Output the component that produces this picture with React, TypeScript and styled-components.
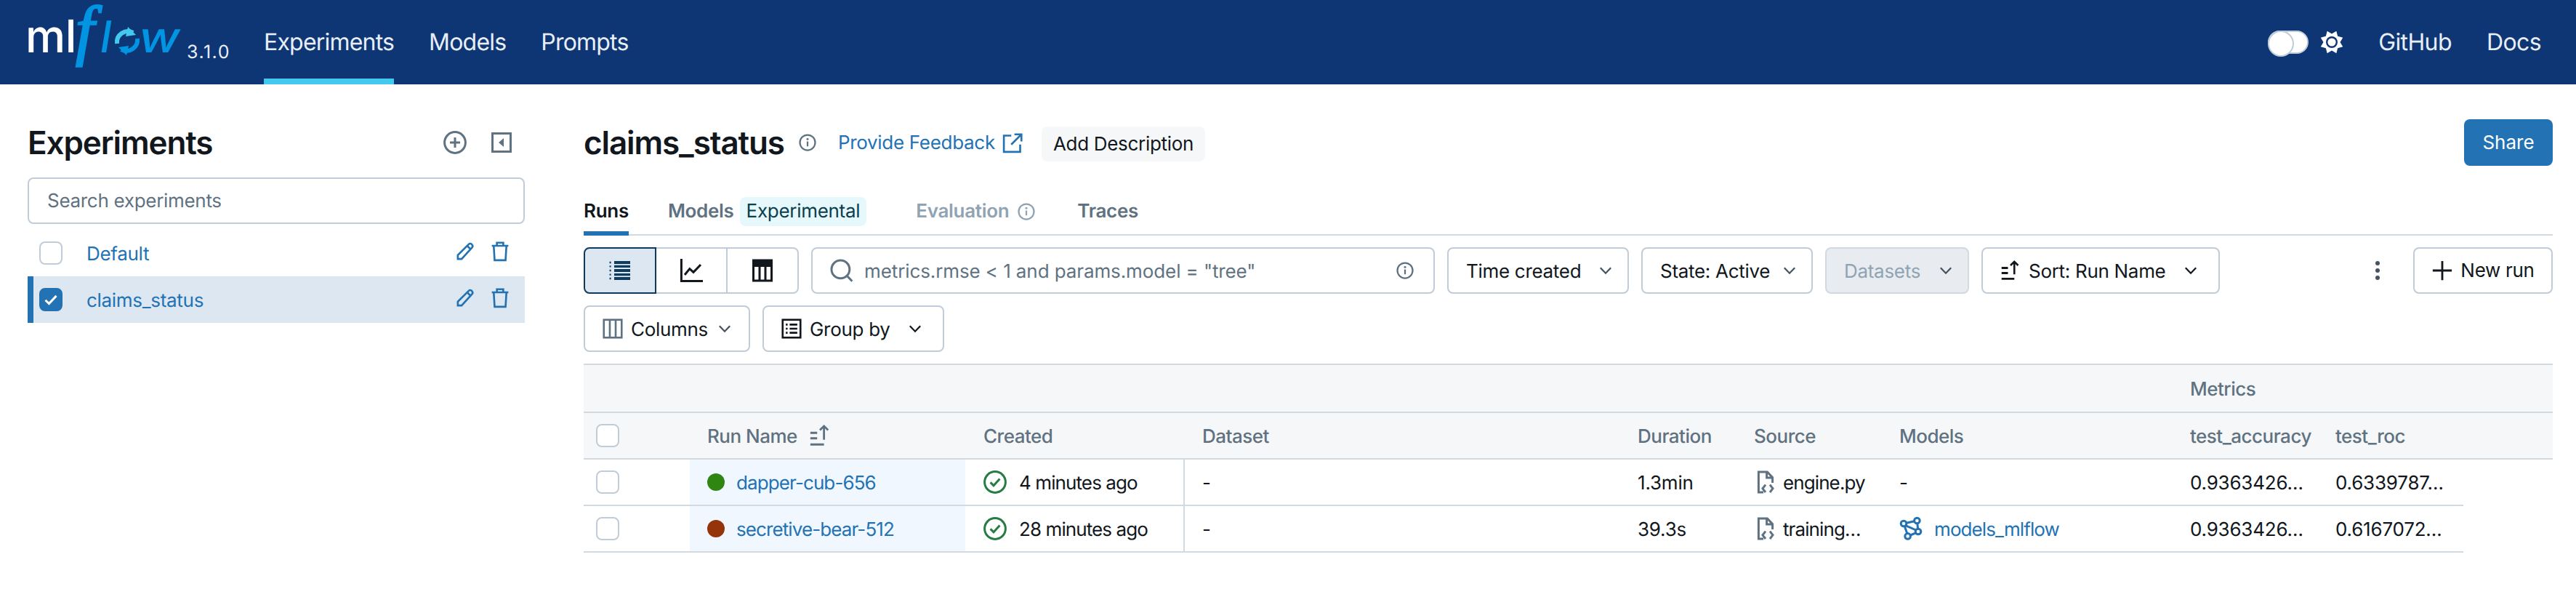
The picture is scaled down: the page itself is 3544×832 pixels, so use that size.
import React from "react";
import styled, { createGlobalStyle } from "styled-components";

const GlobalStyle = createGlobalStyle`
  html, body { margin: 0; padding: 0; background: #fff; }
  body {
    font-family: Inter, "Liberation Sans", sans-serif;
    font-size: 26px;
    line-height: 40px;
    letter-spacing: -0.3px;
    color: #11171c;
    text-rendering: geometricPrecision;
  }
  * { box-sizing: border-box; }
`;

const BLUE = "#2272b4";
const GREY = "#5f7281";
const INK = "#11171c";

const Svg = styled.svg<{ $size?: number; $color?: string }>`
  width: ${(p) => p.$size ?? 32}px;
  height: ${(p) => p.$size ?? 32}px;
  color: ${(p) => p.$color ?? INK};
  flex: none;
  display: block;
  overflow: visible;
`;

type IconProps = { size?: number; color?: string };

const stroke = { fill: "none", stroke: "currentColor", strokeWidth: 1.5 };

const Icon: React.FC<IconProps & { children: React.ReactNode }> = ({ size, color, children }) => (
  <Svg viewBox="0 0 16 16" $size={size} $color={color}>
    {children}
  </Svg>
);

const PlusCircle = (p: IconProps) => (
  <Icon {...p}>
    <circle cx="8" cy="8" r="7.2" {...stroke} />
    <path d="M8 4.5v7M4.5 8h7" {...stroke} />
  </Icon>
);
const Collapse = (p: IconProps) => (
  <Icon {...p}>
    <rect x="1.75" y="1.75" width="12.5" height="12.5" {...stroke} />
    <path d="M9.5 5v6L6 8z" fill="currentColor" />
  </Icon>
);
const Pencil = (p: IconProps) => (
  <Icon {...p}>
    <path d="M2.2 13.8v-3L10.8 2.2a1.6 1.6 0 0 1 2.6 0.4c.6.7.5 1.6 0 2.2L5.2 13.8z" {...stroke} />
    <path d="M9.6 3.6l3 2.8" {...stroke} />
  </Icon>
);
const Trash = (p: IconProps) => (
  <Icon {...p}>
    <path d="M1.5 3.4h13M5.5 3.2V1h5v2.2M3 3.4l.7 11.4h8.6L13 3.4" {...stroke} />
  </Icon>
);
const Check = (p: IconProps) => (
  <Icon {...p}>
    <path d="M3 8.5l3.3 3.2L13 4.6" fill="none" stroke="currentColor" strokeWidth="2" />
  </Icon>
);
const Info = (p: IconProps) => (
  <Icon {...p}>
    <circle cx="8" cy="8" r="7" {...stroke} />
    <path d="M8 7v4.5" {...stroke} />
    <circle cx="8" cy="4.8" r="1" fill="currentColor" />
  </Icon>
);
const External = (p: IconProps) => (
  <Icon {...p}>
    <path d="M7 2H1.2v12.8H14V9M9.5 1h5.5v5.5M15 1L7 9" {...stroke} />
  </Icon>
);
const ListIcon = (p: IconProps) => (
  <Icon {...p}>
    <path d="M4 2.5h11M4 8h11M4 13.5h11" fill="none" stroke="currentColor" strokeWidth="2" />
    <path d="M.8 2.5h1M.8 5.2h1M.8 8h1M.8 10.8h1M.8 13.5h1" fill="none" stroke="currentColor" strokeWidth="1.2" />
    <path d="M4 5.2h11M4 10.8h11" fill="none" stroke="currentColor" strokeWidth="1.6" />
  </Icon>
);
const ChartIcon = (p: IconProps) => (
  <Icon {...p}>
    <path d="M1.2 0v15.2H16M3.5 11l3.4-4.2 2.6 2.4L14.5 4" {...stroke} />
  </Icon>
);
const TableIcon = (p: IconProps) => (
  <Icon {...p}>
    <rect x="1.75" y="1" width="12.5" height="14" {...stroke} />
    <rect x="1.75" y="1" width="12.5" height="4.5" fill="currentColor" />
    <path d="M6 5.5V15M10 5.5V15" {...stroke} />
  </Icon>
);
const Search = (p: IconProps) => (
  <Icon {...p}>
    <circle cx="7.2" cy="7.2" r="6.2" {...stroke} />
    <path d="M11.6 11.6l3.6 3.8" {...stroke} />
  </Icon>
);
const ColumnsIcon = (p: IconProps) => (
  <Icon {...p}>
    <rect x="1" y="1" width="14" height="14" {...stroke} />
    <path d="M5.7 1v14M10.3 1v14" {...stroke} />
  </Icon>
);
const GroupIcon = (p: IconProps) => (
  <Icon {...p}>
    <rect x="1" y="1" width="14" height="14" {...stroke} />
    <path d="M6.5 4.8h6M6.5 8h6M6.5 11.2h6" {...stroke} />
    <path d="M3.5 4.8h1.4M3.5 8h1.4M3.5 11.2h1.4" {...stroke} />
  </Icon>
);
const SortIcon = (p: IconProps) => (
  <Icon {...p}>
    <path d="M1 6h5M1 10h5M1 14.5h10" fill="none" stroke="currentColor" strokeWidth="1.6" />
    <path d="M11 11V1M8 4l3-3 3 3" {...stroke} />
  </Icon>
);
const Chevron = (p: IconProps) => (
  <Icon size={24} {...p}>
    <path d="M3.2 5.5L8 10.5l4.8-5" {...stroke} />
  </Icon>
);
const Plus = (p: IconProps) => (
  <Icon {...p}>
    <path d="M8 1v14M1 8h14" {...stroke} />
  </Icon>
);
const CheckCircle = (p: IconProps) => (
  <Icon {...p} color="#277c43">
    <circle cx="8" cy="8" r="7.2" {...stroke} />
    <path d="M4.8 8.2l2.2 2.2 4.2-4.6" {...stroke} />
  </Icon>
);
const FileCode = (p: IconProps) => (
  <Icon {...p}>
    <path d="M6.5 15H3.2V1h6l3.6 3.8v3.7M8.8 1v4h4" {...stroke} />
    <path d="M8 9.8L6 12.4l2 2.6M11 9.8l2 2.6-2 2.6" {...stroke} />
  </Icon>
);
const ModelIcon = (p: IconProps) => (
  <Icon {...p}>
    <circle cx="3" cy="4.5" r="1.9" {...stroke} />
    <circle cx="12.2" cy="2.5" r="1.9" {...stroke} />
    <circle cx="13" cy="10" r="1.9" {...stroke} />
    <circle cx="5.8" cy="13.2" r="1.9" {...stroke} />
    <path d="M4.8 4.1l5.6-1.2M3.6 6.3l1.8 5M4.5 5.9l7 3.1M11.4 10.9l-3.8 1.6M12.4 4.4l.4 3.7" {...stroke} />
  </Icon>
);

const Sun = () => {
  const points = Array.from({ length: 16 }, (_, i) => {
    const angle = (i * Math.PI) / 8 - Math.PI / 2 + Math.PI / 8;
    const r = i % 2 === 0 ? 16.5 : 11.5;
    return `${16 + r * Math.cos(angle)},${16 + r * Math.sin(angle)}`;
  }).join(" ");
  return (
    <Svg viewBox="0 0 32 32" $size={32} $color="#fff">
      <polygon points={points} fill="currentColor" />
      <circle cx="16" cy="16" r="8" fill="#0e3675" />
      <circle cx="16" cy="16" r="5.6" fill="currentColor" />
    </Svg>
  );
};

const LogoSvg = styled.svg`
  width: 215px;
  height: 96px;
  display: block;
  overflow: visible;
  flex: none;
`;

const LogoMark = () => (
  <LogoSvg viewBox="0 0 215 96">
    <text x="-3" y="62" fontFamily="Inter, sans-serif" fontSize="62" fontWeight="500" fill="#fff">
      ml
    </text>
    <text x="66" y="62" fontFamily="'Liberation Serif', serif" fontStyle="italic" fontSize="92" fill="#0194e2" stroke="#0194e2" strokeWidth="2.5">
      f
    </text>
    <text x="100" y="62" fontFamily="Inter, sans-serif" fontStyle="italic" fontSize="60" fontWeight="500" fill="#0194e2">
      l
    </text>
    <path d="M123 50a15 15 0 0 1 22-15" fill="none" stroke="#43c9ed" strokeWidth="6" />
    <path d="M138 27l11 11-14 2z" fill="#43c9ed" />
    <path d="M151 43a15 15 0 0 1-22 15" fill="none" stroke="#0194e2" strokeWidth="6" />
    <path d="M136 66l-11-11 14-2z" fill="#0194e2" />
    <text x="153" y="62" fontFamily="Inter, sans-serif" fontStyle="italic" fontSize="58" fontWeight="500" fill="#0194e2" textLength="56" lengthAdjust="spacingAndGlyphs">
      w
    </text>
  </LogoSvg>
);

const Page = styled.div`
  width: 3544px;
  height: 832px;
  overflow: hidden;
  background: #fff;
`;

const TopBar = styled.header`
  height: 116px;
  background: #0e3675;
  display: flex;
  align-items: stretch;
  padding: 0 48px 0 38px;
`;

const Brand = styled.div`
  display: flex;
  align-items: center;
  margin-right: 48px;
`;

const Version = styled.span`
  font-size: 25px;
  letter-spacing: 1.5px;
  color: #e8eef5;
  margin: 28px 0 0 4px;
  width: 58px;
`;

const NavList = styled.nav`
  display: flex;
  gap: 48px;
  flex: 1;
`;

const NavItem = styled.a<{ $active?: boolean }>`
  display: flex;
  align-items: center;
  font-size: 32px;
  letter-spacing: -0.8px;
  color: #e8eef5;
  border-bottom: 8px solid ${(p) => (p.$active ? "#43c9ed" : "transparent")};
  border-top: 8px solid transparent;
`;

const TopRight = styled.div`
  display: flex;
  align-items: center;
`;

const Toggle = styled.span`
  width: 56px;
  height: 32px;
  border-radius: 16px;
  background: #fff;
  border: 2px solid #c0cdd8;
  margin-right: 16px;
  display: block;
  position: relative;
  &::before {
    content: "";
    position: absolute;
    left: -2px;
    top: -2px;
    width: 32px;
    height: 32px;
    border-radius: 50%;
    border: 2px solid #c0cdd8;
    background: #fff;
  }
`;

const TopLink = styled.a`
  font-size: 32px;
  letter-spacing: -0.6px;
  color: #e8eef5;
  margin-left: 48px;
`;

const Body = styled.div`
  display: flex;
  align-items: flex-start;
`;

const Sidebar = styled.aside`
  width: 803px;
  flex: none;
  padding: 48px 81px 0 38px;
`;

const SideHead = styled.div`
  height: 64px;
  margin-bottom: 16px;
  display: flex;
  align-items: center;
`;

const H1 = styled.h1`
  font-size: 44px;
  line-height: 56px;
  font-weight: 600;
  letter-spacing: -1.1px;
  margin: 0;
  color: ${INK};
`;

const SideTitle = styled(H1)`
  flex: 1;
`;

const SideHeadIcons = styled.div`
  display: flex;
  gap: 32px;
  margin-right: 16px;
  align-items: center;
`;

const SearchField = styled.div`
  height: 64px;
  border: 2px solid #c0cdd8;
  border-radius: 8px;
  padding: 2px 25px 0;
  display: flex;
  align-items: center;
  color: ${GREY};
  margin-bottom: 8px;
`;

const ExpRow = styled.div<{ $selected?: boolean }>`
  height: 64px;
  display: flex;
  align-items: center;
  background: ${(p) => (p.$selected ? "#dce7f2" : "transparent")};
  border-left: 8px solid ${(p) => (p.$selected ? BLUE : "transparent")};
  padding: 0 20px 0 8px;
`;

const Box = styled.span<{ $checked?: boolean }>`
  width: 32px;
  height: 32px;
  border-radius: 8px;
  flex: none;
  display: flex;
  align-items: center;
  justify-content: center;
  border: 2px solid ${(p) => (p.$checked ? BLUE : "#c0cdd8")};
  background: ${(p) => (p.$checked ? BLUE : "#fff")};
`;

const ExpName = styled.a`
  flex: 1;
  color: ${BLUE};
  margin-left: 33px;
  padding-top: 3px;
`;

const RowIcons = styled.div`
  display: flex;
  gap: 20px;
  margin-top: -4px;
`;

const Main = styled.main`
  flex: 1;
  min-width: 0;
  padding: 48px 32px 0 0;
`;

const TitleRow = styled.div`
  height: 64px;
  display: flex;
  align-items: center;
`;

const TitleInfo = styled.span`
  margin: 0 30px 0 20px;
`;

const FeedbackLink = styled.a`
  color: ${BLUE};
  display: flex;
  align-items: center;
  gap: 10px;
  margin-right: 26px;
  padding-top: 2px;
`;

const AddDescription = styled.button`
  height: 48px;
  border: 0;
  border-radius: 8px;
  background: #f6f7f9;
  padding: 0 16px;
  margin-top: 4px;
  font: inherit;
  letter-spacing: inherit;
  color: ${INK};
`;

const ShareButton = styled.button`
  margin-left: auto;
  width: 122px;
  height: 64px;
  border: 0;
  border-radius: 8px;
  background: ${BLUE};
  color: #fff;
  font: inherit;
`;

const TabBar = styled.div`
  margin-top: 44px;
  height: 52px;
  display: flex;
  gap: 54px;
  border-bottom: 2px solid #d1d9e1;
`;

const Tab = styled.div<{ $active?: boolean; $muted?: boolean }>`
  display: flex;
  align-items: center;
  gap: 12px;
  font-weight: 600;
  height: 52px;
  padding-bottom: 8px;
  color: ${(p) => (p.$active ? INK : p.$muted ? "#8fa3b3" : GREY)};
  border-bottom: 6px solid ${(p) => (p.$active ? BLUE : "transparent")};
  &:last-child {
    margin-left: 4px;
  }
`;

const Tag = styled.span`
  height: 40px;
  display: flex;
  align-items: center;
  padding: 0 9px;
  margin-left: -4px;
  margin-right: 14px;
  background: #e6f8fb;
  color: #0a3f4d;
  border-radius: 8px;
  font-weight: 400;
`;

const ToolRow = styled.div`
  margin-top: 16px;
  display: flex;
  gap: 17px;
  height: 64px;
`;

const Segments = styled.div`
  display: flex;
  width: 296px;
`;

const Segment = styled.span<{ $on?: boolean }>`
  flex: 1;
  display: flex;
  align-items: center;
  justify-content: center;
  border: 2px solid ${(p) => (p.$on ? "#0e3a5e" : "#c0cdd8")};
  background: ${(p) => (p.$on ? "#dce7f2" : "#fff")};
  margin-left: -2px;
  &:first-child {
    margin-left: 0;
    border-radius: 8px 0 0 8px;
    position: relative;
  }
  &:last-child {
    border-radius: 0 8px 8px 0;
  }
`;

const RunSearch = styled.div`
  width: 858px;
  border: 2px solid #c0cdd8;
  border-radius: 8px;
  display: flex;
  align-items: center;
  padding: 0 27px 0 24px;
  gap: 15px;
  color: ${GREY};
`;

const RunSearchText = styled.span`
  flex: 1;
  padding-top: 3px;
  letter-spacing: -0.1px;
`;

const Dropdown = styled.div<{ $w: number; $disabled?: boolean; $pr?: number }>`
  width: ${(p) => p.$w}px;
  border: 2px solid ${(p) => (p.$disabled ? "#d1d9e1" : "#c0cdd8")};
  border-radius: 8px;
  background: ${(p) => (p.$disabled ? "#e8ecf0" : "#fff")};
  color: ${(p) => (p.$disabled ? "#8fa3b3" : INK)};
  display: flex;
  align-items: center;
  padding: 0 ${(p) => p.$pr ?? 18}px 0 24px;
  gap: 11px;
  flex: none;
`;

const DropLabel = styled.span`
  flex: 1;
  white-space: nowrap;
  padding-top: 3px;
`;

const Kebab = styled.div`
  margin-left: auto;
  width: 64px;
  display: flex;
  flex-direction: column;
  align-items: center;
  justify-content: center;
  gap: 4px;
  span {
    width: 6px;
    height: 6px;
    border-radius: 50%;
    background: #45525f;
  }
`;

const NewRun = styled.button`
  width: 192px;
  border: 2px solid #c0cdd8;
  border-radius: 8px;
  background: #fff;
  font: inherit;
  letter-spacing: inherit;
  color: ${INK};
  display: flex;
  align-items: center;
  justify-content: center;
  gap: 10px;
  padding: 0;
`;

const Table = styled.div`
  margin-top: 16px;
`;

const COLUMNS = "146px 379px 302px 599px 160px 200px 400px 200px 200px";

const GroupHead = styled.div`
  height: 68px;
  background: #f6f7f9;
  border-top: 2px solid #d1d9e1;
  border-bottom: 2px solid #d1d9e1;
  display: grid;
  grid-template-columns: 2186px 1fr;
  align-items: center;
  color: ${GREY};
  font-weight: 500;
  letter-spacing: -0.5px;
`;

const HeadRow = styled.div`
  height: 64px;
  background: #f6f7f9;
  border-bottom: 2px solid #d1d9e1;
  display: grid;
  grid-template-columns: ${COLUMNS} 1fr;
  color: ${GREY};
  font-weight: 500;
  letter-spacing: -0.5px;
`;

const DataRow = styled.div`
  height: 64px;
  width: 2586px;
  border-bottom: 2px solid #d1d9e1;
  display: grid;
  grid-template-columns: ${COLUMNS};
  letter-spacing: -0.9px;
`;

const Cell = styled.div<{ $pad?: number; $run?: boolean; $rule?: boolean; $gap?: number }>`
  display: flex;
  align-items: center;
  gap: ${(p) => p.$gap ?? 0}px;
  padding-left: ${(p) => p.$pad ?? 24}px;
  white-space: nowrap;
  background: ${(p) => (p.$run ? "#f0f7fe" : "transparent")};
  border-right: ${(p) => (p.$rule ? "2px solid #d1d9e1" : "0")};
`;

const Label = styled.span<{ $num?: boolean }>`
  padding-top: 3px;
  ${(p) => (p.$num ? "letter-spacing: -0.2px;" : "")}
`;

const Dot = styled.span<{ $color: string }>`
  width: 24px;
  height: 24px;
  border-radius: 50%;
  background: ${(p) => p.$color};
  flex: none;
`;

const LinkText = styled(Label)`
  color: ${BLUE};
`;

const runs = [
  {
    name: "dapper-cub-656",
    dot: "#2f8610",
    created: "4 minutes ago",
    duration: "1.3min",
    source: "engine.py",
    model: "",
    accuracy: "0.9363426…",
    roc: "0.6339787…",
  },
  {
    name: "secretive-bear-512",
    dot: "#95330a",
    created: "28 minutes ago",
    duration: "39.3s",
    source: "training…",
    model: "models_mlflow",
    accuracy: "0.9363426…",
    roc: "0.6167072…",
  },
];

const App: React.FC = () => {
  return (
    <Page>
      <GlobalStyle />
      <TopBar>
        <Brand>
          <LogoMark />
          <Version>3.1.0</Version>
        </Brand>
        <NavList>
          <NavItem $active>Experiments</NavItem>
          <NavItem>Models</NavItem>
          <NavItem>Prompts</NavItem>
        </NavList>
        <TopRight>
          <Toggle />
          <Sun />
          <TopLink>GitHub</TopLink>
          <TopLink>Docs</TopLink>
        </TopRight>
      </TopBar>
      <Body>
        <Sidebar>
          <SideHead>
            <SideTitle>Experiments</SideTitle>
            <SideHeadIcons>
              <PlusCircle color={GREY} />
              <Collapse color={GREY} />
            </SideHeadIcons>
          </SideHead>
          <SearchField>Search experiments</SearchField>
          <ExpRow>
            <Box />
            <ExpName>Default</ExpName>
            <RowIcons>
              <Pencil size={28} color={BLUE} />
              <Trash size={28} color={BLUE} />
            </RowIcons>
          </ExpRow>
          <ExpRow $selected>
            <Box $checked>
              <Check size={24} color="#fff" />
            </Box>
            <ExpName>claims_status</ExpName>
            <RowIcons>
              <Pencil size={28} color={BLUE} />
              <Trash size={28} color={BLUE} />
            </RowIcons>
          </ExpRow>
        </Sidebar>
        <Main>
          <TitleRow>
            <H1>claims_status</H1>
            <TitleInfo>
              <Info size={24} color={GREY} />
            </TitleInfo>
            <FeedbackLink>
              Provide Feedback
              <External size={28} color={BLUE} />
            </FeedbackLink>
            <AddDescription>Add Description</AddDescription>
            <ShareButton>Share</ShareButton>
          </TitleRow>
          <TabBar>
            <Tab $active>Runs</Tab>
            <Tab>
              Models<Tag>Experimental</Tag>
            </Tab>
            <Tab $muted>
              Evaluation <Info size={24} color="#8fa3b3" />
            </Tab>
            <Tab>Traces</Tab>
          </TabBar>
          <ToolRow>
            <Segments>
              <Segment $on>
                <ListIcon color="#0e3a5e" />
              </Segment>
              <Segment>
                <ChartIcon />
              </Segment>
              <Segment>
                <TableIcon />
              </Segment>
            </Segments>
            <RunSearch>
              <Search color={GREY} />
              <RunSearchText>metrics.rmse &lt; 1 and params.model = "tree"</RunSearchText>
              <Info size={24} color={GREY} />
            </RunSearch>
            <Dropdown $w={250}>
              <DropLabel>Time created</DropLabel>
              <Chevron color="#45525f" />
            </Dropdown>
            <Dropdown $w={236}>
              <DropLabel>State: Active</DropLabel>
              <Chevron color="#45525f" />
            </Dropdown>
            <Dropdown $w={198} $disabled>
              <DropLabel>Datasets</DropLabel>
              <Chevron color="#45525f" />
            </Dropdown>
            <Dropdown $w={328} $pr={26}>
              <SortIcon size={28} />
              <DropLabel>Sort: Run Name</DropLabel>
              <Chevron color={INK} />
            </Dropdown>
            <Kebab>
              <span />
              <span />
              <span />
            </Kebab>
            <NewRun>
              <Plus size={30} />
              New run
            </NewRun>
          </ToolRow>
          <ToolRow>
            <Dropdown $w={229} $pr={25}>
              <ColumnsIcon size={28} color={GREY} />
              <DropLabel>Columns</DropLabel>
              <Chevron color="#45525f" />
            </Dropdown>
            <Dropdown $w={250} $pr={26}>
              <GroupIcon size={28} />
              <DropLabel>Group by</DropLabel>
              <Chevron color={INK} />
            </Dropdown>
          </ToolRow>
          <Table>
            <GroupHead>
              <span />
              <Cell>
                <Label>Metrics</Label>
              </Cell>
            </GroupHead>
            <HeadRow>
              <Cell $pad={17}>
                <Box />
              </Cell>
              <Cell $gap={16}>
                <Label>Run Name</Label> <SortIcon size={30} color={GREY} />
              </Cell>
              <Cell $pad={25}>
                <Label>Created</Label>
              </Cell>
              <Cell>
                <Label>Dataset</Label>
              </Cell>
              <Cell>
                <Label>Duration</Label>
              </Cell>
              <Cell>
                <Label>Source</Label>
              </Cell>
              <Cell>
                <Label>Models</Label>
              </Cell>
              <Cell>
                <Label>test_accuracy</Label>
              </Cell>
              <Cell>
                <Label>test_roc</Label>
              </Cell>
              <span />
            </HeadRow>
            {runs.map((run) => (
              <DataRow key={run.name}>
                <Cell $pad={17}>
                  <Box />
                </Cell>
                <Cell $run $gap={16}>
                  <Dot $color={run.dot} />
                  <LinkText>{run.name}</LinkText>
                </Cell>
                <Cell $pad={25} $gap={17} $rule>
                  <CheckCircle />
                  <Label>{run.created}</Label>
                </Cell>
                <Cell>
                  <Label>-</Label>
                </Cell>
                <Cell>
                  <Label $num>{run.duration}</Label>
                </Cell>
                <Cell $gap={8}>
                  <FileCode size={32} color={GREY} />
                  <Label>{run.source}</Label>
                </Cell>
                <Cell $gap={16}>
                  {run.model ? (
                    <>
                      <ModelIcon color={BLUE} />
                      <LinkText>{run.model}</LinkText>
                    </>
                  ) : (
                    <Label>-</Label>
                  )}
                </Cell>
                <Cell>
                  <Label $num>{run.accuracy}</Label>
                </Cell>
                <Cell>
                  <Label $num>{run.roc}</Label>
                </Cell>
              </DataRow>
            ))}
          </Table>
        </Main>
      </Body>
    </Page>
  );
};

export default App;
